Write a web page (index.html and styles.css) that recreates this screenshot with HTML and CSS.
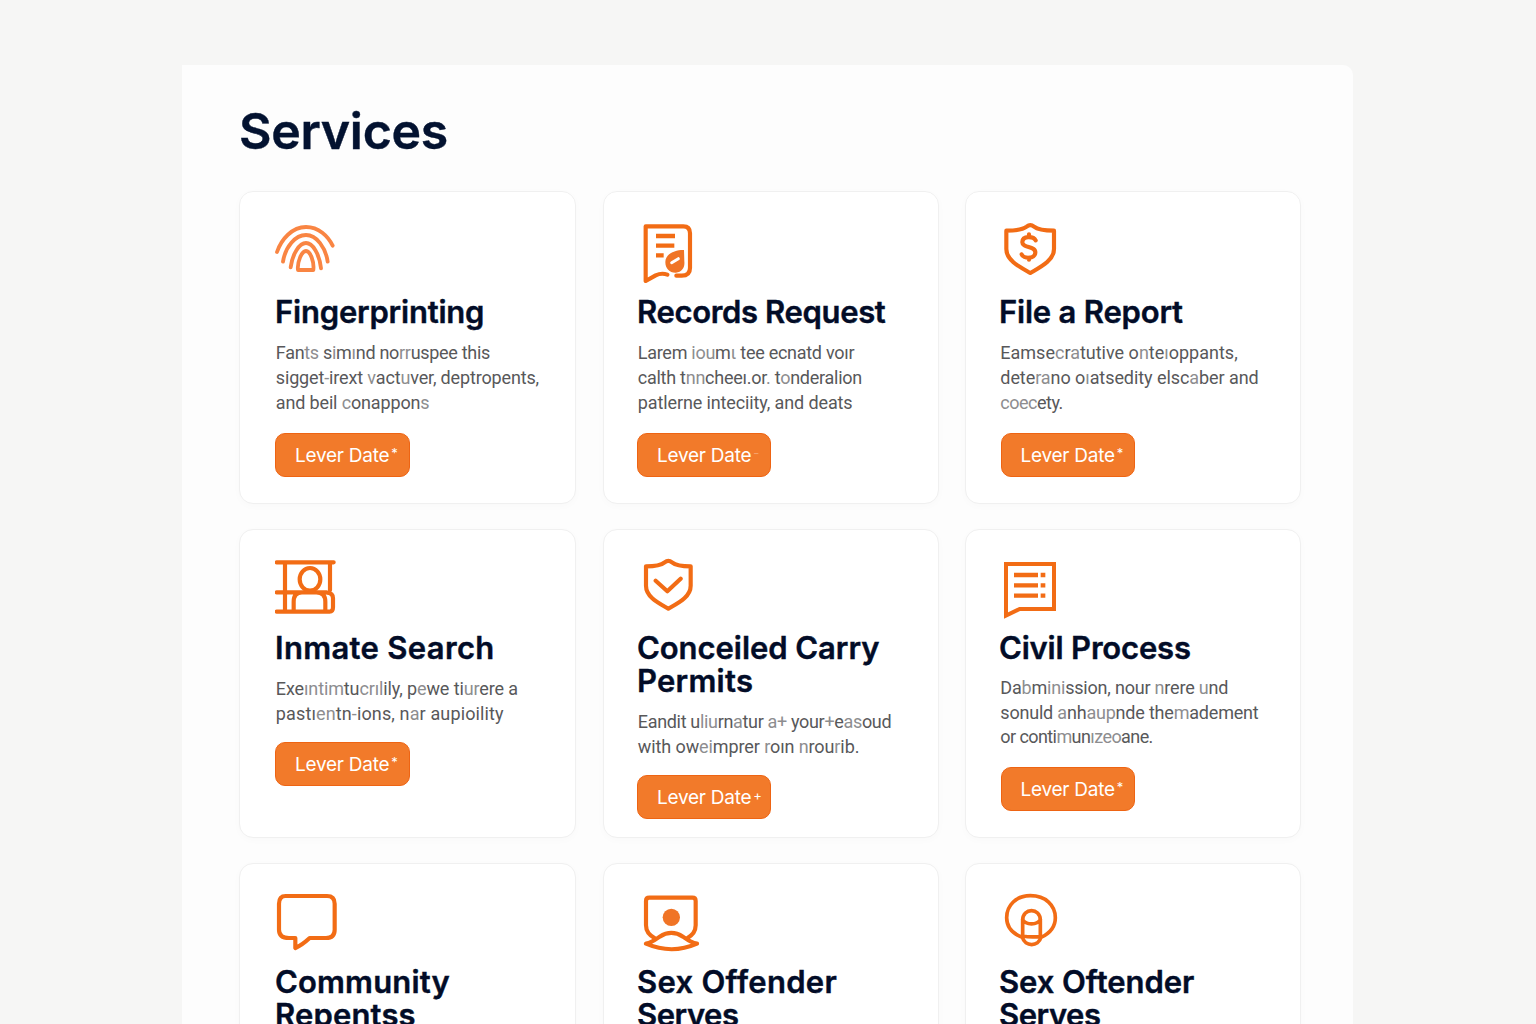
FILE: index.html
```html
<!DOCTYPE html>
<html lang="en">
<head>
<meta charset="utf-8">
<title>Services</title>
<link rel="stylesheet" href="styles.css">
</head>
<body>
<main class="panel">
  <h1 class="heading">Services</h1>
  <div class="grid">
    <article class="card left fingerprint">
      <svg class="icon soft" viewBox="135 117 210 192"><path d="M141 216C154 178 186 141 228 141C266 141 294 168 308 197M159 245C166 200 196 165 228 165C260 165 287 203 293 245M182 262C187 222 208 189 228 189C248 189 268 221 273 265M204 270C201 247 215 213 228 213C241 213 253 246 250 270Z"/></svg>
      <h2 class="title"><span>Fingerprinting</span></h2>
      <p class="text"><span>Fan<i>ts</i> s<i>i</i>m<i>ı</i>nd no<i>rr</i>uspee this</span><span>sigget<i>-</i>irext <i>v</i>act<i>u</i>ver, deptropents,</span><span>and beil <i>c</i>onappon<i>s</i></span></p>
      <a class="button"><span>Lever Date</span><sup>*</sup></a>
    </article>
    <article class="card middle records">
      <svg class="icon" viewBox="126 117 210 192"><path d="M217 284C206 280 193 281 182 286L152 303V139H265Q285 139 285 160V264Q285 287 260 287H244"/><path class="flat" d="M183 168H240M183 197H238M183 226H206"/><path class="solid" d="M267 210C244 209 211 220 211 246C211 267 225 279 243 278C261 276 270 262 268 244Z"/><path class="cut" d="M230 248L250 236"/></svg>
      <h2 class="title"><span>Records Request</span></h2>
      <p class="text"><span>Larem <i>iou</i>m<i>ι</i> tee ecnatd voır</span><span>calth t<i>nn</i>cheeı.or<i>.</i> t<i>o</i>nderalion</span><span>patlerne inteciity, and deats</span></p>
      <a class="button"><span>Lever Date</span><sup class="ghost">-</sup></a>
    </article>
    <article class="card right report">
      <svg class="icon" viewBox="132 117 210 192"><path d="M154 152C181 152 202 150 215 140Q226 131 237 140C249 150 270 152 297 152V207C297 242 255 262 226 279C196 262 154 242 154 207Z"/><path d="M242 181C236 169 203 166 202 186C201 205 241 197 241 217C241 239 204 236 200 223M222 163V170M222 233V239"/></svg>
      <h2 class="title"><span>File a Report</span></h2>
      <p class="text"><span>Eamse<i>c</i>r<i>a</i>tutive o<i>n</i>te<i>ı</i>oppants,</span><span>dete<i>ra</i>no o<i>ı</i>atsedity elsc<i>a</i>ber and</span><span><i>coec</i>ety.</span></p>
      <a class="button"><span>Lever Date</span><sup>*</sup></a>
    </article>
    <article class="card left lower inmate">
      <svg class="icon" viewBox="135 114 210 192"><path d="M140 127H311M140 217H290M140 275H299Q309 275 309 262V235Q309 219 291 218M165 127V275M300 127V211M191 275V245Q191 217 216 217H259Q286 217 286 245V275"/><ellipse class="paper" cx="240" cy="178" rx="31" ry="34"/></svg>
      <h2 class="title"><span>Inmate Search</span></h2>
      <p class="text"><span>Exe<i>ıntim</i>tu<i>crıl</i>ily, p<i>e</i>we ti<i>ur</i>ere a</span><span>pastı<i>en</i>tn<i>-</i>ions, n<i>a</i>r aupioility</span></p>
      <a class="button"><span>Lever Date</span><sup>*</sup></a>
    </article>
    <article class="card middle lower permits">
      <svg class="icon" viewBox="126 114 210 192"><path d="M153 139C178 139 197 137 209 127Q220 118 231 127C243 137 262 139 287 139V197C287 231 249 249 220 266C191 249 153 231 153 197ZM182 182L217 214L257 176"/></svg>
      <h2 class="title"><span>Conceiled Carry</span><span>Permits</span></h2>
      <p class="text"><span>Eandit u<i>liu</i>rn<i>a</i>tur <i>a+</i> your<i>+</i>e<i>as</i>oud</span><span>with ow<i>ei</i>mprer <i>r</i>oın <i>n</i>rou<i>r</i>ib.</span></p>
      <a class="button"><span>Lever Date</span><sup>+</sup></a>
    </article>
    <article class="card right lower civil">
      <svg class="icon sharp" viewBox="132 114 210 192"><path d="M153 132H297V267H194L153 287Z"/><path class="flat" d="M177 165H249M177 196H249M177 227H249M257 165H271M257 196H271M257 227H271"/></svg>
      <h2 class="title"><span>Civil Process</span></h2>
      <p class="text"><span>Da<i>b</i>m<i>ini</i>ssion, nour <i>n</i>rere <i>u</i>nd</span><span>sonuld <i>a</i>nh<i>aup</i>nde the<i>m</i>adement</span><span>or conti<i>m</i>un<i>ızeo</i>ane.</span></p>
      <a class="button"><span>Lever Date</span><sup>*</sup></a>
    </article>
    <article class="card left lower community">
      <svg class="icon" viewBox="135 111 210 192"><path d="M167 123H291Q314 123 314 146V224Q314 249 288 249H239C225 262 212 272 196 279V249H177Q147 249 147 224V146Q147 123 167 123Z"/></svg>
      <h2 class="title"><span>Community</span><span>Repentss</span></h2>
    </article>
    <article class="card middle lower offender">
      <svg class="icon" viewBox="126 111 210 192"><path d="M180 250C164 242 153 229 153 211V138Q153 128 163 128H292Q302 128 302 138V211C302 229 291 242 276 250M153 266C168 264 180 255 194 245Q229 222 264 245C278 255 290 264 306 266C256 288 204 288 153 266Z"/><circle class="solid" cx="229" cy="187" r="26"/></svg>
      <h2 class="title"><span>Sex Offender</span><span>Serves</span></h2>
    </article>
    <article class="card right lower oftender">
      <svg class="icon" viewBox="132 111 210 192"><path class="thin" d="M202 247C174 236 155 217 155 188C155 151 184 122 226 122C272 122 301 151 301 188C301 216 284 235 258 247M203 247V196C203 157 256 157 256 196V247M203 194C213 211 246 211 256 194M202 243Q230 248 258 244M202 247C210 276 250 276 258 247"/></svg>
      <h2 class="title"><span>Sex Oftender</span><span>Serves</span></h2>
    </article>
  </div>
</main>
</body>
</html>
```
FILE: styles.css
```css
* { box-sizing: border-box; margin: 0; padding: 0; }
body { height: 1024px; overflow: hidden; background: #f6f6f5; font-family: Inter, "Liberation Sans", sans-serif; }
.panel { width: 1171px; height: 959px; margin: 65px 0 0 182px; padding: 34px 52px 0 57px; overflow: hidden; background: #fdfdfd; border-radius: 0 10px 0 0; }
.heading { height: 92px; font-size: 50px; line-height: 64px; font-weight: 600; letter-spacing: -.3px; color: #031230; -webkit-text-stroke: .4px #031230; }
.grid { display: grid; grid-template-columns: 337.5px 336.5px 336px; grid-template-rows: 313px 309px 309px; gap: 25px 26px; }

.card { display: flex; flex-direction: column; align-items: flex-start; padding: 27px 0 0 35px; background: #fff; border: 1px solid #f0f0f0; border-radius: 14px; box-shadow: 0 2px 8px rgba(0, 0, 0, .02); }
.card.left { margin-right: 1px; }
.card.middle { padding-left: 33.5px; }
.card.right { padding-left: 33px; }
.card.lower { padding-top: 28px; }

.icon { width: 70px; height: 64px; flex: none; fill: none; stroke: #f26c15; stroke-width: 12.5; stroke-linecap: round; stroke-linejoin: round; }
.icon.soft { stroke: #f98543; stroke-width: 11.5; }
.icon.sharp { stroke-width: 12; stroke-linejoin: miter; }
.icon .flat { stroke-linecap: butt; stroke-width: 13; }
.icon .solid { fill: #f07426; stroke: none; }
.icon .cut { stroke: #fff; stroke-width: 9; }
.icon .paper { fill: #fff; }
.icon .thin { stroke-width: 11; }

.title { margin: 12px 0 0 0; font-size: 31px; line-height: 33px; font-weight: 600; color: #020c27; white-space: nowrap; -webkit-text-stroke: .4px #020c27; }
.lower .title { margin-top: 9px; }
.title span, .text span { display: block; }
.text { margin: 11.6px 0 -.6px .8px; font: 18px/25px Roboto, sans-serif; color: #58585a; white-space: nowrap; }
.text i { font-style: normal; color: #8d8d8f; }
.lower .text { margin-top: 12px; margin-bottom: 0; }
.right .text { margin-left: 1.3px; }

.button { display: flex; width: 135px; height: 44px; margin-top: 19px; padding-left: 19px; align-items: center; border: 1px solid #ee6413; border-radius: 10px; background: #f27a2a; color: #fff; font-size: 19px; letter-spacing: -.25px; white-space: nowrap; }
.button sup { margin-left: 2px; padding-bottom: 4px; font-size: 13px; line-height: 14px; }
.button .ghost { opacity: .3; }
.lower .button { margin-top: 16px; }
.middle .button { width: 134px; }
.right .button { width: 134px; margin-left: 2px; padding-left: 18.5px; }

/* Optical tracking of the individual lines */
.fingerprint .title { letter-spacing: -.2px; }
.fingerprint .text span:nth-child(1) { letter-spacing: -.3px; }
.fingerprint .text span:nth-child(2) { letter-spacing: -.15px; }
.fingerprint .text span:nth-child(3) { letter-spacing: -.15px; }
.records .title { letter-spacing: -.35px; }
.records .text span:nth-child(1) { letter-spacing: -.28px; }
.records .text span:nth-child(2) { letter-spacing: -.26px; }
.records .text span:nth-child(3) { letter-spacing: -.12px; }
.report .title { letter-spacing: -.2px; }
.report .text span:nth-child(2) { letter-spacing: -.07px; }
.report .text span:nth-child(3) { letter-spacing: -.5px; }
.inmate .title { letter-spacing: .33px; }
.inmate .text span:nth-child(1) { letter-spacing: -.12px; }
.inmate .text span:nth-child(2) { letter-spacing: .13px; }
.permits .title span:nth-child(1) { letter-spacing: -.05px; }
.permits .title span:nth-child(2) { letter-spacing: .25px; }
.permits .text span:nth-child(1) { letter-spacing: -.33px; }
.permits .text span:nth-child(2) { letter-spacing: -.1px; }
.civil .title { letter-spacing: -.18px; }
.civil .text { line-height: 24.7px; }
.civil .text span:nth-child(1) { letter-spacing: -.2px; }
.civil .text span:nth-child(2) { letter-spacing: -.2px; }
.civil .text span:nth-child(3) { letter-spacing: -.58px; }
.civil .button { margin-top: 17px; }
.community .title { letter-spacing: .15px; }
.offender .title span:nth-child(1) { letter-spacing: .3px; }
.oftender .title span:nth-child(1) { letter-spacing: -.05px; }
.offender .title span:nth-child(2), .oftender .title span:nth-child(2) { letter-spacing: -.45px; }
```
